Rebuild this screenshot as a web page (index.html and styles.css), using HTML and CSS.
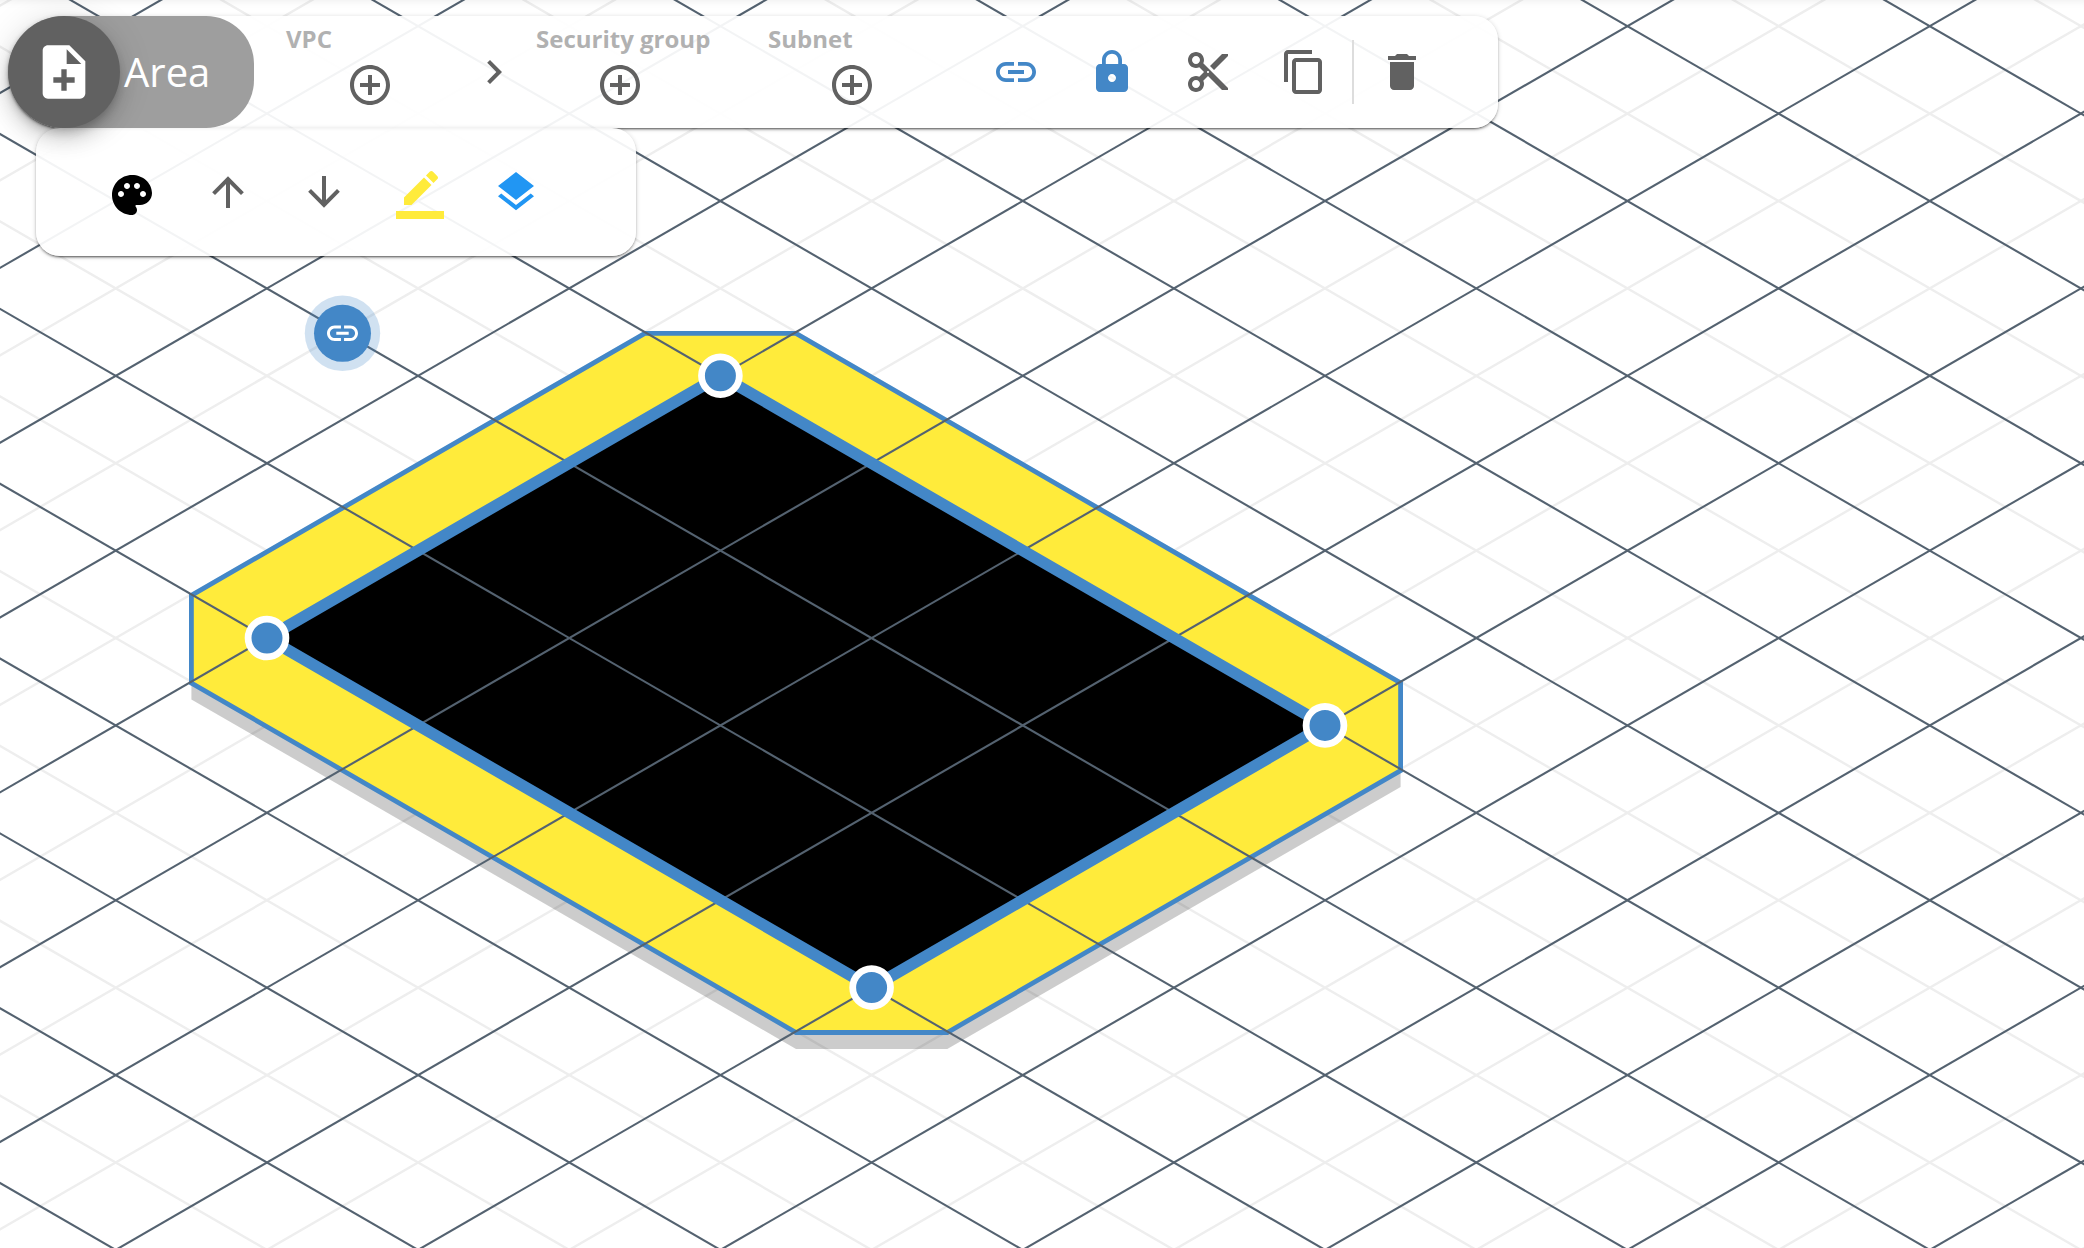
FILE: index.html
```html
<!DOCTYPE html>
<html lang="en">
<head>
<meta charset="utf-8">
<title>Area</title>
<link rel="stylesheet" href="styles.css">
</head>
<body>
<svg class="canvas" viewBox="0 0 2084 1248">
  <g id="grid-minor" class="grid-minor"></g>
  <polygon class="area-shadow" points="191.4,611 644.6,349 796,349 1400.6,699 1400.6,787 947.3,1049 796,1049 191.4,699.5"/>
  <polygon class="area-outline" points="191.4,595.4 644.8,333.3 796,333.3 1400.6,683 1400.6,770.6 947.3,1032.5 796,1032.5 191.4,683"/>
  <polygon class="area-fill" points="267,637.9 720.4,375.7 1325,725.3 871.6,987.6"/>
  <g id="grid-major" class="grid-major"></g>
  <polygon class="area-border" points="267,637.9 720.4,375.7 1325,725.3 871.6,987.6"/>
  <g class="handles">
    <circle cx="267" cy="638" r="18.9"/>
    <circle cx="720.4" cy="375.8" r="18.9"/>
    <circle cx="1325" cy="725.4" r="18.9"/>
    <circle cx="871.6" cy="987.6" r="18.9"/>
  </g>
  <g transform="translate(342.5 333.3)">
    <circle class="link-halo" r="37.7"/>
    <circle class="link-disc" r="28.5"/>
    <path class="link-glyph" transform="scale(1.55) translate(-12 -12)" d="M3.9 12c0-1.71 1.39-3.1 3.1-3.1h4V7H7c-2.76 0-5 2.24-5 5s2.24 5 5 5h4v-1.9H7c-1.71 0-3.1-1.39-3.1-3.1zM8 13h8v-2H8v2zm9-6h-4v1.9h4c1.71 0 3.1 1.39 3.1 3.1s-1.39 3.1-3.1 3.1h-4V17h4c2.76 0 5-2.24 5-5s-2.24-5-5-5z"/>
  </g>
</svg>

<main class="chrome">
  <header class="toolbar">
    <div class="title">
      <div class="fab"><svg viewBox="0 0 24 24"><path d="M14 2H6c-1.1 0-1.99.9-1.99 2L4 20c0 1.1.89 2 1.99 2H18c1.1 0 2-.9 2-2V8l-6-6zm2 14h-3v3h-2v-3H8v-2h3v-3h2v3h3v2zm-3-7V3.5L18.5 9H13z"/></svg></div>
      <span class="title-text">Area</span>
    </div>
    <div class="group vpc"><span class="label">VPC</span>
      <svg class="icon" viewBox="0 0 24 24"><path d="M13 7h-2v4H7v2h4v4h2v-4h4v-2h-4V7zm-1-5C6.48 2 2 6.48 2 12s4.48 10 10 10 10-4.48 10-10S17.52 2 12 2zm0 18c-4.41 0-8-3.59-8-8s3.59-8 8-8 8 3.59 8 8-3.59 8-8 8z"/></svg>
    </div>
    <svg class="icon chevron" viewBox="0 0 24 24"><path d="M10 6L8.59 7.41 13.17 12l-4.58 4.59L10 18l6-6z"/></svg>
    <div class="group security"><span class="label">Security group</span>
      <svg class="icon" viewBox="0 0 24 24"><path d="M13 7h-2v4H7v2h4v4h2v-4h4v-2h-4V7zm-1-5C6.48 2 2 6.48 2 12s4.48 10 10 10 10-4.48 10-10S17.52 2 12 2zm0 18c-4.41 0-8-3.59-8-8s3.59-8 8-8 8 3.59 8 8-3.59 8-8 8z"/></svg>
    </div>
    <div class="group subnet"><span class="label">Subnet</span>
      <svg class="icon" viewBox="0 0 24 24"><path d="M13 7h-2v4H7v2h4v4h2v-4h4v-2h-4V7zm-1-5C6.48 2 2 6.48 2 12s4.48 10 10 10 10-4.48 10-10S17.52 2 12 2zm0 18c-4.41 0-8-3.59-8-8s3.59-8 8-8 8 3.59 8 8-3.59 8-8 8z"/></svg>
    </div>
    <div class="actions">
      <svg class="icon blue" viewBox="0 0 24 24"><path d="M3.9 12c0-1.71 1.39-3.1 3.1-3.1h4V7H7c-2.76 0-5 2.24-5 5s2.24 5 5 5h4v-1.9H7c-1.71 0-3.1-1.39-3.1-3.1zM8 13h8v-2H8v2zm9-6h-4v1.9h4c1.71 0 3.1 1.39 3.1 3.1s-1.39 3.1-3.1 3.1h-4V17h4c2.76 0 5-2.24 5-5s-2.24-5-5-5z"/></svg>
      <svg class="icon blue" viewBox="0 0 24 24"><path d="M18 8h-1V6c0-2.76-2.24-5-5-5S7 3.24 7 6v2H6c-1.1 0-2 .9-2 2v10c0 1.1.9 2 2 2h12c1.1 0 2-.9 2-2V10c0-1.100-.9-2-2-2zm-6 9c-1.100 0-2-.9-2-2s.9-2 2-2 2 .9 2 2-.9 2-2 2zm3.100-9H8.900V6c0-1.710 1.390-3.100 3.100-3.100 1.710 0 3.100 1.390 3.100 3.100v2z"/></svg>
      <svg class="icon" viewBox="0 0 24 24"><path d="M9.640 7.640c.23-.5.360-1.050.360-1.640 0-2.210-1.790-4-4-4S2 3.790 2 6s1.790 4 4 4c.59 0 1.140-.13 1.640-.36L10 12l-2.360 2.360C7.140 14.130 6.590 14 6 14c-2.210 0-4 1.790-4 4s1.790 4 4 4 4-1.790 4-4c0-.59-.13-1.140-.36-1.640L12 14l7 7h3v-1L9.640 7.640zM6 8c-1.100 0-2-.89-2-2s.9-2 2-2 2 .89 2 2-.9 2-2 2zm0 12c-1.100 0-2-.89-2-2s.9-2 2-2 2 .89 2 2-.9 2-2 2zm6-7.500c-.28 0-.5-.22-.5-.5s.22-.5.5-.5.5.22.5.5-.22.5-.5.5zM19 3l-6 6 2 2 7-7V3z"/></svg>
      <svg class="icon" viewBox="0 0 24 24"><path d="M16 1H4c-1.100 0-2 .9-2 2v14h2V3h12V1zm3 4H8c-1.100 0-2 .9-2 2v14c0 1.100.9 2 2 2h11c1.100 0 2-.9 2-2V7c0-1.100-.9-2-2-2zm0 16H8V7h11v14z"/></svg>
    </div>
    <span class="divider"></span>
    <svg class="icon trash" viewBox="0 0 24 24"><path d="M6 19c0 1.100.9 2 2 2h8c1.100 0 2-.9 2-2V7H6v12zM19 4h-3.500l-1-1h-5l-1 1H5v2h14V4z"/></svg>
  </header>
  <nav class="subbar">
    <svg class="icon black" viewBox="0 -1.500 24 24"><path transform="translate(0 1)" d="M12 1C6.490 1 2 5.490 2 11s4.490 10 10 10c1.380 0 2.500-1.120 2.500-2.500 0-.61-.23-1.200-.64-1.670-.08-.1-.13-.21-.13-.33 0-.28.22-.5.5-.5H16c3.310 0 6-2.690 6-6 0-4.960-4.490-9-10-9zm5.500 11c-.83 0-1.500-.67-1.500-1.500S16.670 9 17.500 9s1.500.67 1.500 1.500-.67 1.500-1.500 1.500zm-3-4c-.83 0-1.500-.67-1.500-1.500S13.670 5 14.500 5s1.500.67 1.500 1.500S15.330 8 14.500 8zM5 10.500C5 9.670 5.670 9 6.500 9S8 9.670 8 10.500 7.330 12 6.500 12 5 11.330 5 10.500zm6-4C11 7.330 10.330 8 9.500 8S8 7.330 8 6.500 8.670 5 9.500 5s1.500.67 1.500 1.500z"/></svg>
    <svg class="icon" viewBox="0 0 24 24"><path d="M13,20H11V8L5.500,13.500L4.080,12.080L12,4.160L19.920,12.080L18.500,13.500L13,8V20Z"/></svg>
    <svg class="icon" viewBox="0 0 24 24"><path d="M11,4H13V16L18.500,10.500L19.920,11.920L12,19.840L4.080,11.920L5.500,10.500L11,16V4Z"/></svg>
    <svg class="icon yellow" viewBox="0 0 24 24"><path transform="translate(0 1.500)" d="M17.750 7L14 3.250l-10 10V17h3.750l10-10zm2.960-2.960c.39-.39.39-1.020 0-1.410L18.370.29c-.39-.39-1.020-.39-1.410 0L15 2.250 18.750 6l1.960-1.960zM0 20h24v4H0z"/></svg>
    <svg class="icon azure" viewBox="0 0 24 24"><path d="M12,16L19.360,10.270L21,9L12,2L3,9L4.630,10.270M12,18.540L4.620,12.810L3,14.070L12,21.070L21,14.070L19.370,12.800L12,18.540Z"/></svg>
  </nav>
</main>
<script src="grid.js"></script>
</body>
</html>
```
FILE: styles.css
```css
* { box-sizing: border-box; }

body {
  margin: 0;
  width: 2084px;
  height: 1248px;
  overflow: hidden;
  background: #fff;
  font-family: "Open Sans", "Noto Sans", sans-serif;
  color: #616161;
}

/* isometric canvas behind the toolbars */
.canvas {
  position: absolute;
  inset: 0;
  width: 2084px;
  height: 1248px;
}
.grid-minor { stroke: #eee; stroke-width: 2.4; }
.grid-major { stroke: #546270; stroke-width: 2.1; }
.area-shadow { fill: #000; fill-opacity: .2; }
.area-outline { fill: #ffeb3b; stroke: #4387c7; stroke-width: 4.8; }
.area-fill { fill: #000; }
.area-border { fill: none; stroke: #4387c7; stroke-width: 11.6; }
.handles { fill: #4387c7; stroke: #fff; stroke-width: 6.8; }
.link-halo { fill: #4387c7; fill-opacity: .25; }
.link-disc { fill: #4387c7; }
.link-glyph { fill: #fff; }

.chrome {
  position: relative;
  display: flex;
  flex-direction: column;
  align-items: flex-start;
  height: 1248px;
  padding: 16px 8px;
  box-shadow: inset 0 8px 10px -8px rgba(0, 0, 0, .09);
}

.toolbar, .subbar {
  display: flex;
  background: rgba(255, 255, 255, .93);
  box-shadow: 0 3px 1px -2px rgba(0, 0, 0, .3), 0 2px 2px rgba(0, 0, 0, .24), 0 1px 5px rgba(0, 0, 0, .18);
}
.toolbar {
  width: 1490px;
  height: 112px;
  border-radius: 56px 24px 24px 56px;
}
.icon {
  flex: none;
  width: 48px;
  height: 48px;
  fill: #616161;
  overflow: visible;
}
.blue { fill: #4387c7; }
.black { fill: #000; }
.yellow { fill: #ffeb3b; }
.azure { fill: #2196f3; }

.title {
  position: relative;
  z-index: 2;
  flex: none;
  display: flex;
  align-items: center;
  width: 246px;
  height: 112px;
  border-radius: 56px 48px 48px 56px;
  background: #9e9e9e;
  color: #fff;
}
.fab {
  flex: none;
  display: flex;
  align-items: center;
  justify-content: center;
  width: 112px;
  height: 112px;
  border-radius: 50%;
  background: #616161;
  box-shadow: 0 6px 10px -2px rgba(0, 0, 0, .2), 0 12px 20px rgba(0, 0, 0, .14), 0 2px 36px rgba(0, 0, 0, .12);
}
.fab svg { width: 64px; height: 64px; fill: #fff; }
.title-text { padding-left: 4px; font-size: 40px; line-height: 56px; }

.group {
  flex: none;
  display: flex;
  flex-direction: column;
  align-items: center;
  padding-top: 7px;
}
.label {
  align-self: flex-start;
  height: 38px;
  font-size: 24px;
  line-height: 32px;
  font-weight: 700;
  color: #b1b1b1;
  white-space: nowrap;
}
.vpc { width: 168px; margin-left: 32px; }
.chevron { align-self: center; margin-left: 16px; }
.security { width: 168px; margin-left: 18px; }
.subnet { width: 168px; margin-left: 64px; }

.actions {
  display: flex;
  align-items: center;
  gap: 48px;
  margin-left: 56px;
}
.divider {
  align-self: center;
  width: 2px;
  height: 64px;
  margin-left: 24px;
  background: #ddd;
}
.trash { align-self: center; margin-left: 24px; }

.subbar {
  position: relative;
  z-index: 1;
  width: 600px;
  height: 128px;
  margin-left: 28px;
  padding: 0 0 0 72px;
  gap: 48px;
  align-items: center;
  border-radius: 24px;
}
```
FILE: grid.js
```js
// Isometric grid: two families of parallel lines, minor ones halfway between major ones.
const W = 2084, SLOPE = 87.41 / 151.17, STEP = 174.82;
const ORIGIN = { x: 720.4, y: 375.8 };

function drawGrid(id, offset) {
  const group = document.getElementById(id);
  for (const s of [SLOPE, -SLOPE]) {
    const base = ORIGIN.y - s * ORIGIN.x + offset;
    for (let k = -16; k <= 16; k++) {
      const c = base + k * STEP;
      const line = document.createElementNS("http://www.w3.org/2000/svg", "line");
      line.setAttribute("x1", -5);
      line.setAttribute("y1", c - 5 * s);
      line.setAttribute("x2", W + 5);
      line.setAttribute("y2", c + (W + 5) * s);
      group.appendChild(line);
    }
  }
}

drawGrid("grid-minor", STEP / 2);
drawGrid("grid-major", 0);
```
